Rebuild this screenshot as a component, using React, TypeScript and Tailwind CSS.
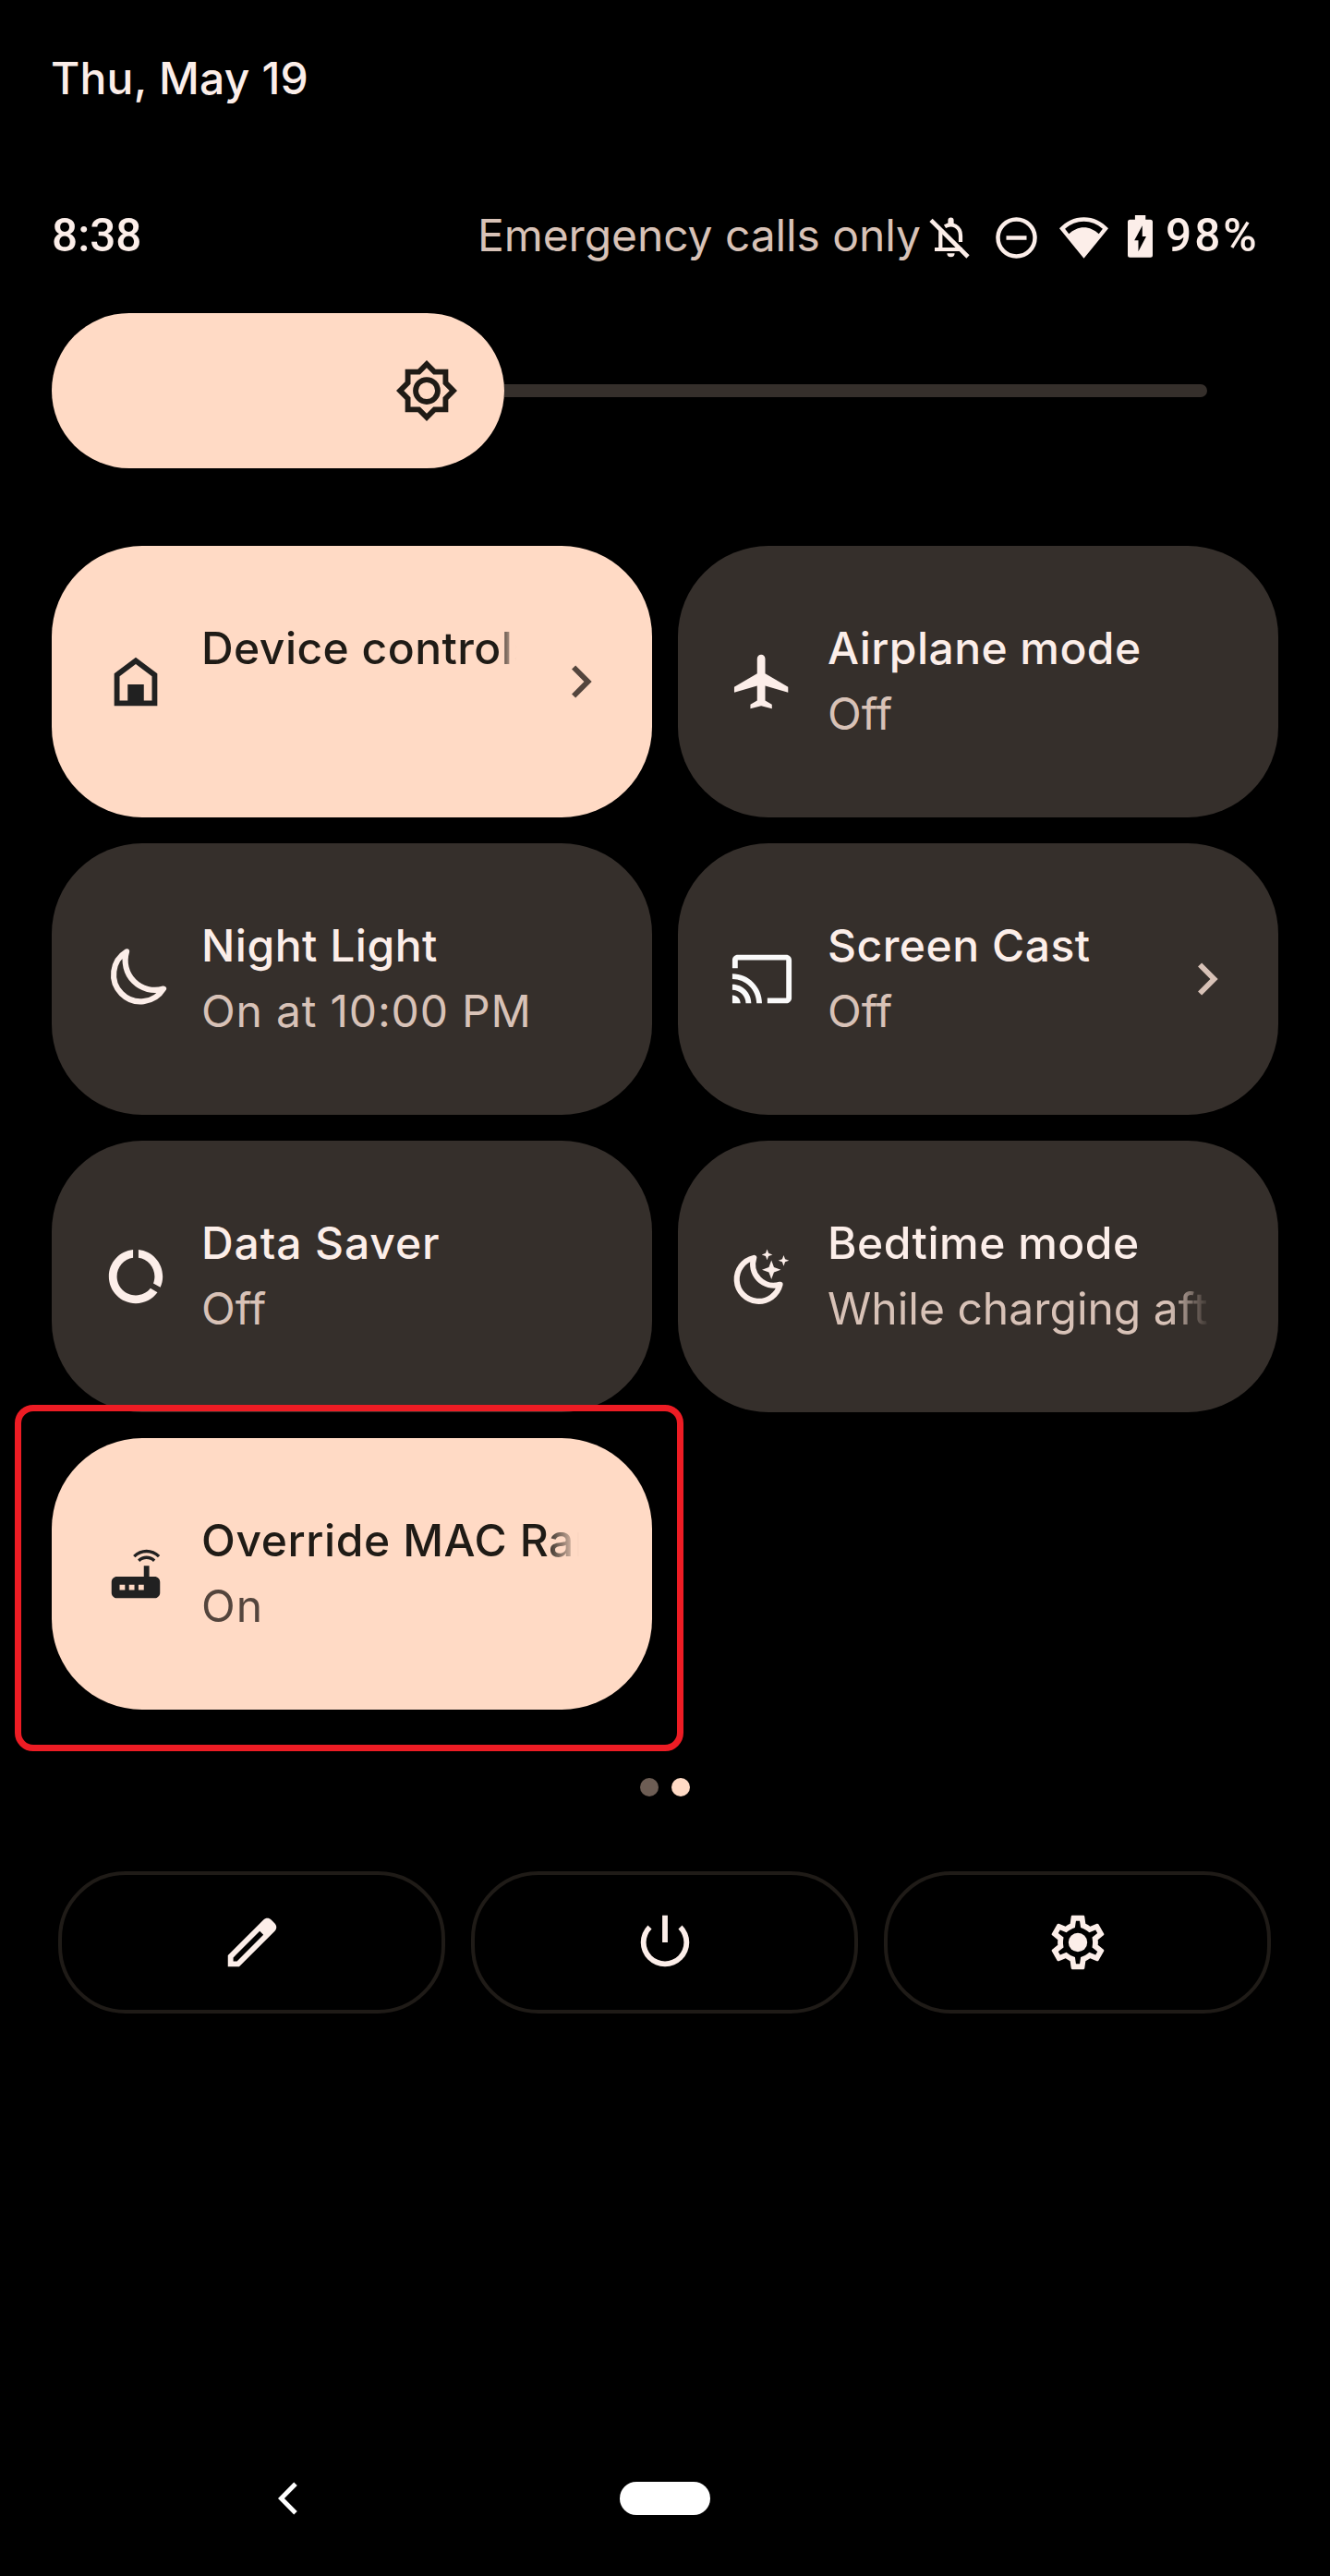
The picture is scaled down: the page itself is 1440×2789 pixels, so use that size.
import type { ReactNode } from "react";

function Glyph({ d, className = "", children, viewBox = "0 0 24 24" }: { d?: string; className?: string; children?: ReactNode; viewBox?: string }) {
  return (
    <svg viewBox={viewBox} fill="currentColor" className={`h-[70px] w-[70px] shrink-0 ${className}`}>
      {d && <path fillRule="evenodd" d={d} />}
      {children}
    </svg>
  );
}

const star = (x: number, y: number, r: number) => {
  const k = r * 0.27;
  return `M${x} ${y - r}L${x + k} ${y - k}L${x + r} ${y}L${x + k} ${y + k}L${x} ${y + r}L${x - k} ${y + k}L${x - r} ${y}L${x - k} ${y - k}Z`;
};

const HomeIcon = () => (
  <Glyph className="text-[#212121]" d="M12 3L4 9v12h16V9l-8-6zm6 16h-3v-6H9v6H6v-9l6-4.5 6 4.5v9z" />
);
const PlaneIcon = () => (
  <Glyph
    viewBox="0.3 0 24 24"
    d="M22 16v-2l-8.5-5V3.5c0-.83-.67-1.5-1.5-1.5s-1.5.67-1.5 1.5V9L2 14v2l8.5-2.5V19L8 20.5V22l4-1 4 1v-1.5L13.5 19v-5.5L22 16z"
  />
);
const MoonIcon = () => (
  <Glyph>
    <path
      d="M8.6 1.8A10 10 0 1 0 22.3 15.6A11 11 0 0 1 8.6 1.8Z"
      fill="none"
      stroke="currentColor"
      strokeWidth="2.1"
      strokeLinejoin="round"
    />
  </Glyph>
);
const CastIcon = () => (
  <Glyph
    className="text-[#fafafa]"
    d="M21 3H3c-1.1 0-2 .9-2 2v3h2V5h18v14h-7v2h7c1.1 0 2-.9 2-2V5c0-1.1-.9-2-2-2zM1 18v3h3c0-1.66-1.34-3-3-3zm0-4v2c2.76 0 5 2.24 5 5h2c0-3.87-3.13-7-7-7zm0-4v2c4.97 0 9 4.03 9 9h2c0-6.08-4.93-11-11-11z"
  />
);
const DataIcon = () => (
  <Glyph d="M13 2.05v3.03c3.39.49 6 3.39 6 6.92 0 .9-.18 1.75-.48 2.54l2.6 1.53c.56-1.24.88-2.62.88-4.07 0-5.18-3.95-9.45-9-9.95zM12 19c-3.87 0-7-3.13-7-7 0-3.53 2.61-6.43 6-6.92V2.05c-5.06.5-9 4.76-9 9.95 0 5.52 4.47 10 9.99 10 3.31 0 6.24-1.61 8.06-4.09l-2.6-1.53C16.17 17.98 14.21 19 12 19z" />
);
const BedtimeIcon = () => (
  <Glyph>
    <path
      d="M9 5.1A8.15 8.15 0 1 0 18.7 15A7.8 7.8 0 0 1 9 5.1Z"
      fill="none"
      stroke="currentColor"
      strokeWidth="2.1"
      strokeLinejoin="round"
    />
    <path d={star(13.9, 3.9, 2) + star(20.05, 6.1, 2) + star(15.5, 9.5, 3.5)} />
  </Glyph>
);
const RouterIcon = () => (
  <Glyph
    className="text-[#212121]"
    d="M20.2 5.9l.8-.8C19.6 3.7 17.8 3 16 3s-3.6.7-5 2.1l.8.8C13 4.8 14.5 4.2 16 4.2s3 .6 4.2 1.7zm-.9.8c-.9-.9-2.1-1.4-3.3-1.4s-2.4.5-3.3 1.4l.8.8c.7-.7 1.6-1 2.5-1 .9 0 1.8.3 2.5 1l.8-.8zM19 13h-2V9h-2v4H5c-1.1 0-2 .9-2 2v4c0 1.1.9 2 2 2h14c1.1 0 2-.9 2-2v-4c0-1.1-.9-2-2-2zM8 18H6v-2h2v2zm3.5 0h-2v-2h2v2zm3.5 0h-2v-2h2v2z"
  />
);
const EditIcon = () => (
  <Glyph d="M20.41 4.94l-1.35-1.35c-.78-.78-2.05-.78-2.83 0L3 16.82V21h4.18L20.41 7.77c.79-.78.79-2.05 0-2.83zM6.35 19H5v-1.35l9.82-9.82 1.36 1.35L6.35 19z" />
);
const PowerIcon = () => (
  <Glyph d="M11 2h2v10h-2zM18.36 5.64L16.95 7.05A7 7 0 1 1 7.05 7.05L5.64 5.64A9 9 0 1 0 18.36 5.64z" />
);
const GearIcon = () => (
  <Glyph d="M19.43 12.98c.04-.32.07-.64.07-.98 0-.34-.03-.66-.07-.98l2.11-1.65c.19-.15.24-.42.12-.64l-2-3.46c-.09-.16-.26-.25-.44-.25-.06 0-.12.01-.17.03l-2.49 1c-.52-.4-1.08-.73-1.69-.98l-.38-2.65C14.46 2.18 14.25 2 14 2h-4c-.25 0-.46.18-.49.42l-.38 2.65c-.61.25-1.17.59-1.69.98l-2.49-1c-.06-.02-.12-.03-.18-.03-.17 0-.34.09-.43.25l-2 3.46c-.13.22-.07.49.12.64l2.11 1.65c-.04.32-.07.65-.07.98 0 .33.03.66.07.98l-2.11 1.65c-.19.15-.24.42-.12.64l2 3.46c.09.16.26.25.44.25.06 0 .12-.01.17-.03l2.49-1c.52.4 1.08.73 1.69.98l.38 2.65c.03.24.24.42.49.42h4c.25 0 .46-.18.49-.42l.38-2.65c.61-.25 1.17-.59 1.69-.98l2.49 1c.06.02.12.03.18.03.17 0 .34-.09.43-.25l2-3.46c.12-.22.07-.49-.12-.64l-2.11-1.65zm-1.98-1.71c.04.31.05.52.05.73 0 .21-.02.43-.05.73l-.14 1.13.89.7 1.08.84-.7 1.21-1.27-.51-1.04-.42-.9.68c-.43.32-.84.56-1.25.73l-1.06.43-.16 1.13-.2 1.35h-1.4l-.19-1.35-.16-1.13-1.06-.43c-.43-.18-.83-.41-1.23-.71l-.91-.7-1.06.43-1.27.51-.7-1.21 1.08-.84.89-.7-.14-1.13c-.03-.31-.05-.54-.05-.74s.02-.43.05-.73l.14-1.13-.89-.7-1.08-.84.7-1.21 1.27.51 1.04.42.9-.68c.43-.32.84-.56 1.25-.73l1.06-.43.16-1.13.2-1.35h1.39l.19 1.35.16 1.13 1.06.43c.43.18.83.41 1.23.71l.91.7 1.06-.43 1.27-.51.7 1.21-1.07.85-.89.7.14 1.13z">
    <circle cx="12" cy="12" r="3.5" />
  </Glyph>
);
const SunIcon = () => (
  <Glyph
    className="text-[#1f1b16]"
    d="M20 15.31L23.31 12 20 8.69V4h-4.69L12 .69 8.69 4H4v4.69L.69 12 4 15.31V20h4.69L12 23.31 15.31 20H20v-4.69zM18 14.48V18h-3.52L12 20.48 9.52 18H6v-3.52L3.52 12 6 9.52V6h3.52L12 3.52 14.48 6H18v3.52L20.48 12 18 14.48zM12 6.9a5.1 5.1 0 1 0 0 10.2a5.1 5.1 0 1 0 0-10.2zm0 2a3.1 3.1 0 1 1 0 6.2a3.1 3.1 0 1 1 0-6.2z"
  />
);
const Chevron = ({ className }: { className: string }) => (
  <Glyph className={className} d="M10 6L8.59 7.41 13.17 12l-4.58 4.59L10 18l6-6z" />
);

type TileProps = {
  icon: ReactNode;
  title: string;
  titleClass: string;
  sub?: string;
  subClass?: string;
  active?: boolean;
  chevron?: boolean;
  fadeClass?: string;
  highlight?: boolean;
};

const FADE_SHORT = "[mask-image:linear-gradient(to_right,#000_calc(100%_-_26px),transparent_calc(100%_-_7px))]";
const FADE_TITLE = "[mask-image:linear-gradient(to_right,#000_calc(100%_-_46px),transparent_calc(100%_-_9px))]";
const FADE_SUB = "[mask-image:linear-gradient(to_right,#000_calc(100%_-_48px),transparent_calc(100%_-_4px))]";

function Tile({ icon, title, titleClass, sub, subClass = "", active, chevron, fadeClass = "", highlight }: TileProps) {
  const subColor = active ? "text-[#54453d]" : "text-[#d8c2b7]";
  return (
    <div
      className={`relative flex h-[294px] items-center rounded-[98px] pl-14 ${chevron ? "pr-[42px]" : "pr-[70px]"} ${
        active ? "bg-[#ffdac5] text-[#1f1b16]" : "bg-[#352f2b] text-[#fceee9]"
      }`}
    >
      {icon}
      <div className={`ml-9 min-w-0 flex-1 overflow-hidden pb-0.5 leading-[71px] whitespace-nowrap ${fadeClass}`}>
        <div className={`font-medium ${titleClass}`}>{title}</div>
        <div className={`h-[71px] ${subColor} ${subClass}`}>{sub}</div>
      </div>
      {chevron && <Chevron className={`ml-7 ${subColor}`} />}
      {highlight && (
        <div className="absolute -top-9 -left-10 h-[375px] w-[724px] rounded-[20px] border-[7px] border-[#ed1c24]" />
      )}
    </div>
  );
}

function FooterButton({ children }: { children: ReactNode }) {
  return (
    <button className="flex h-[154px] w-[419px] items-center justify-center rounded-[73px] border-4 border-[#1f1b17] text-[#fceee9]">
      {children}
    </button>
  );
}

export default function App() {
  return (
    <div className="h-[2789px] w-[1440px] overflow-hidden bg-black px-14 pt-14 font-['Inter',sans-serif] text-[48px] leading-[58px] text-[#fceee9]">
      <div className="-ml-px font-medium tracking-[0.2px]">Thu, May 19</div>

      <div className="mt-28 flex h-[58px] items-center whitespace-nowrap">
        <span className="w-[461px] font-['Roboto',sans-serif] text-[49.5px] font-medium">8:38</span>
        <span className="w-[489px] tracking-[-0.1px] text-[#d8c2b7]">Emergency calls only</span>
        <svg viewBox="0 0 44 46" className="mt-1 h-[46px] w-11 shrink-0" fill="none" stroke="currentColor" strokeWidth="4.2">
          <path d="M12.3 15V36M6 36H36M17 11.2C25 6.5 34 11.5 34 21V28" />
          <path d="M2 4.3L42 44" strokeWidth="4.6" />
          <path d="M20.4 9V4.6a3.1 3.1 0 0 1 6.2 0V9zM19.4 40.2h8.2a4.1 4.1 0 0 1-8.2 0z" fill="currentColor" stroke="none" />
        </svg>
        <svg viewBox="0 0 45 45" className="mt-1 ml-7 h-[45px] w-[45px] shrink-0" fill="none" stroke="currentColor" strokeWidth="4.5">
          <circle cx="22.5" cy="22.5" r="20" />
          <path d="M11.5 22.5h22" />
        </svg>
        <svg viewBox="0 0 53 45" className="mt-1 ml-6 h-[45px] w-[53px] shrink-0" fill="currentColor">
          <path
            fillRule="evenodd"
            d="M26.5 44.7L0 12.3C7 5 16 .3 26.5 .3S46 5 53 12.3ZM6.1 12.8L10.3 18.3C15 14 20.5 11.3 26.5 11.3S38 14 42.7 18.3L46.9 12.8C41 7.5 34 4.7 26.5 4.7S12 7.5 6.1 12.8Z"
          />
        </svg>
        <svg viewBox="0 0 27 46" className="mt-0.5 ml-[21px] h-[46px] w-[27px] shrink-0" fill="currentColor">
          <path
            fillRule="evenodd"
            d="M7.9 0H19.3V4.7H24.5A2.5 2.5 0 0 1 27 7.2V43.3A2.5 2.5 0 0 1 24.5 45.8H2.5A2.5 2.5 0 0 1 0 43.3V7.2A2.5 2.5 0 0 1 2.5 4.7H7.9ZM15.8 11.3L7.2 27.3H11.5V39.3L20 23H15.8Z"
          />
        </svg>
        <span className="ml-3.5 font-['Roboto',sans-serif] text-[49.5px] font-medium tracking-[3px]">98%</span>
      </div>

      <div className="mt-[55px] flex items-center">
        <div className="flex h-[168px] w-[490px] items-center justify-end rounded-[84px] bg-[#ffdac5] pr-[49px]">
          <SunIcon />
        </div>
        <div className="h-3.5 w-[761px] rounded-r-[7px] bg-[#352f2b]" />
      </div>

      <div className="mt-[84px] grid w-[1328px] grid-cols-2 gap-7">
        <Tile icon={<HomeIcon />} title="Device controls" titleClass="tracking-[0.46px]" active chevron fadeClass={FADE_SHORT} />
        <Tile icon={<PlaneIcon />} title="Airplane mode" titleClass="tracking-[0.44px]" sub="Off" />
        <Tile icon={<MoonIcon />} title="Night Light" titleClass="tracking-[0.5px]" sub="On at 10:00 PM" subClass="tracking-[0.8px]" />
        <Tile icon={<CastIcon />} title="Screen Cast" titleClass="tracking-[0.5px]" sub="Off" chevron />
        <Tile icon={<DataIcon />} title="Data Saver" titleClass="tracking-[0.9px]" sub="Off" />
        <Tile icon={<BedtimeIcon />} title="Bedtime mode" titleClass="tracking-[0.5px]" sub="While charging after" fadeClass={FADE_SUB} />
        <Tile icon={<RouterIcon />} title="Override MAC Randomization" titleClass="tracking-[0.6px]" sub="On" subClass="tracking-[1px]" active fadeClass={FADE_TITLE} highlight />
      </div>

      <div className="mt-[74px] flex h-5 items-center justify-center gap-3.5">
        <div className="h-5 w-5 rounded-full bg-[#6d5d54]" />
        <div className="h-5 w-5 rounded-full bg-[#ffdac5]" />
      </div>

      <div className="mt-[81px] ml-[7px] flex gap-7">
        <FooterButton><EditIcon /></FooterButton>
        <FooterButton><PowerIcon /></FooterButton>
        <FooterButton><GearIcon /></FooterButton>
      </div>

      <div className="mt-[507px] flex h-9 items-center">
        <svg viewBox="0 0 21 36" className="ml-[245px] h-9 w-[21px] text-white" fill="none" stroke="currentColor" strokeWidth="5">
          <path d="M19 2.2L3.4 18L19 33.8" />
        </svg>
        <div className="ml-[349px] h-9 w-[98px] rounded-[18px] bg-white" />
      </div>
    </div>
  );
}
